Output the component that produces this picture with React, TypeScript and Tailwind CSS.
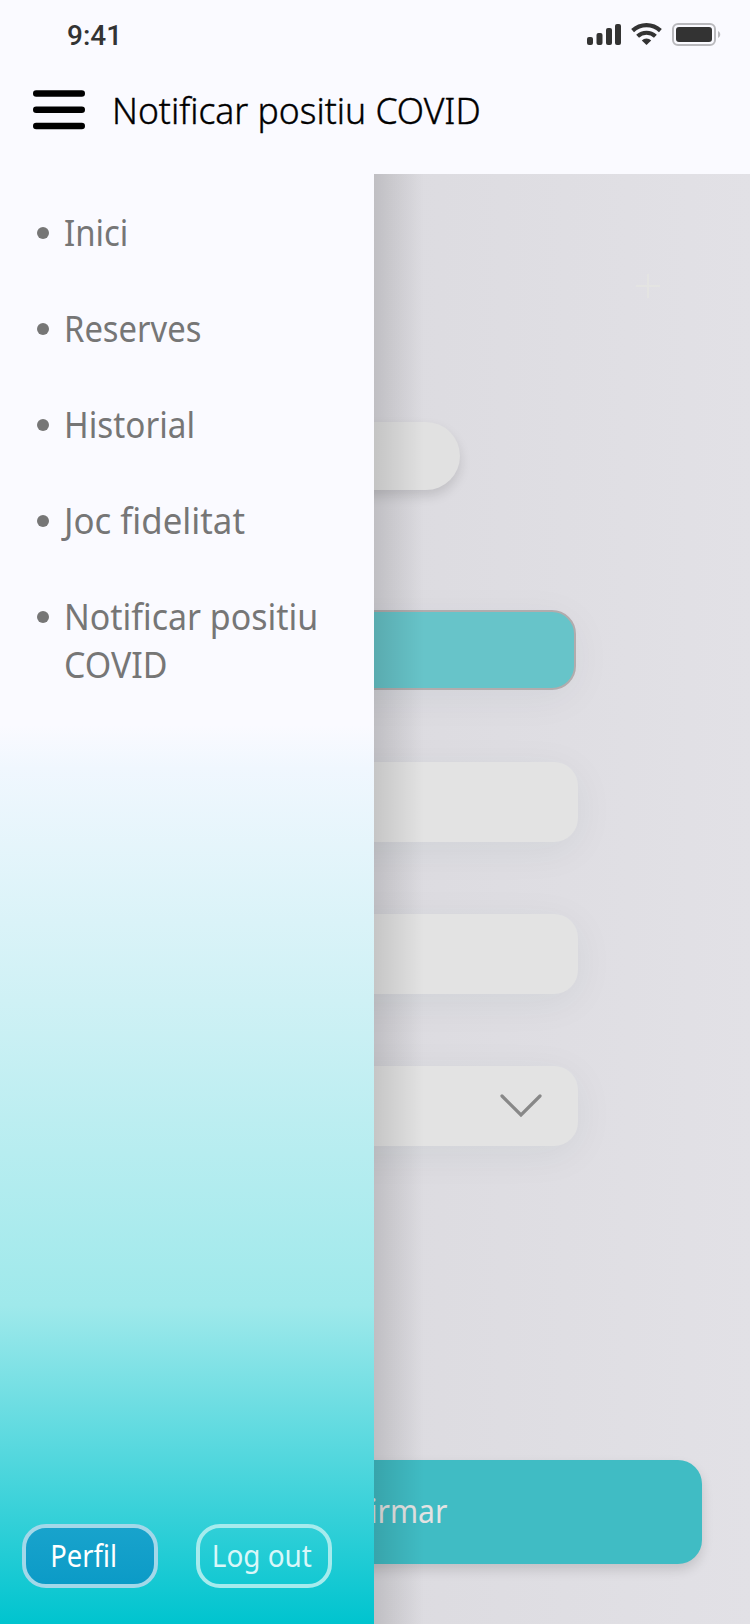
const items = [
  { label: "Inici", fit: "scale-x-[0.915]" },
  { label: "Reserves", fit: "scale-x-[0.91]" },
  { label: "Historial", fit: "scale-x-[0.925]" },
  { label: "Joc fidelitat", fit: "scale-x-[0.967]" },
  { label: "Notificar positiu COVID", fit: "scale-x-[0.942]" },
];

function StatusBar() {
  return (
    <div className="flex h-[70px] items-center justify-between pr-[27px] pl-[67px]">
      <span className="pt-px font-[Roboto] text-[28px] leading-none font-medium text-[#333]">9:41</span>
      <svg width="136" height="24" viewBox="0 0 136 24" fill="#333">
        <rect x="0" y="14" width="6" height="8" rx="2" />
        <rect x="9.5" y="10" width="6" height="12" rx="2" />
        <rect x="19" y="5" width="6" height="17" rx="2" />
        <rect x="28" y="1" width="6" height="21" rx="2" />
        <g fill="none" stroke="#333" strokeWidth="4.2">
          <path d="M45.6 7.6a20.4 20.4 0 0 1 27.8 0" />
          <path d="M50.6 13.2a13.2 13.2 0 0 1 17.8 0" />
        </g>
        <path d="M54.8 17.4a6.6 6.6 0 0 1 9.4 0L59.5 22z" />
        <rect x="86" y="1" width="42" height="21" rx="5" fill="none" stroke="#b9b9bd" strokeWidth="2" />
        <rect x="89" y="4" width="36" height="15" rx="3" />
        <path d="M131 8v7c3-1.500 3-5.500 0-7z" fill="#b9b9bd" />
      </svg>
    </div>
  );
}

function Field({ chevron = false }: { chevron?: boolean }) {
  return (
    <div className="flex h-20 w-[404px] items-center justify-end rounded-3xl bg-[#e3e3e3] pr-9 shadow-[0_8px_40px_rgba(0,60,70,0.06)]">
      {chevron && (
        <svg width="42" height="24" viewBox="0 0 42 24" fill="none" stroke="#888" strokeWidth="3.2" strokeLinecap="round">
          <path d="M2 2l19 19L40 2" />
        </svg>
      )}
    </div>
  );
}

export default function App() {
  return (
    <div className="flex h-[1624px] w-[750px] flex-col overflow-hidden bg-[#fafaff] font-['Noto_Sans',sans-serif]">
      <header className="h-[174px] shrink-0">
        <StatusBar />
        <div className="flex items-start pt-[17px] pl-[33px]">
          <svg className="mt-[2px]" width="52" height="44" viewBox="0 0 52 44" stroke="#000" strokeWidth="6.4" strokeLinecap="round">
            <path d="M3.200 4.500h45.600M3.200 20.700h45.600M3.200 37h45.600" />
          </svg>
          <h1 className="ml-[27px] origin-left scale-x-[0.986] text-[36px] leading-[48px] font-light text-black [-webkit-text-stroke:0.4px_black]">
            Notificar positiu COVID
          </h1>
        </div>
      </header>

      <main className="relative flex-1 bg-linear-to-r from-[#dcdbe0] from-50% to-[#e2e1e6]">
        <div className="flex h-full flex-col pl-[174px]">
          <div className="flex h-[248px] pt-[100px] pl-[462px]">
            <svg width="24" height="24" viewBox="0 0 24 24" stroke="#e4e4e2" strokeWidth="2">
              <path d="M12 0v24M0 12h24" />
            </svg>
          </div>
          <div className="h-[68px] w-[286px] rounded-full bg-[#e1e1e1] shadow-[0_6px_12px_rgba(0,0,0,0.13)]" />
          <div className="mt-[120px] mb-[72px] h-20 w-[402px] rounded-3xl border-2 border-[#b1acad] bg-[#67c4c9] shadow-[0_8px_40px_rgba(0,60,70,0.05)]" />
          <div className="flex flex-col gap-[72px]">
            <Field />
            <Field />
            <Field chevron />
          </div>
          <button className="mt-[314px] -ml-[126px] h-[104px] w-[654px] rounded-3xl bg-[#40bcc4] pb-[2px] text-[32px] text-[#e3e3e3] shadow-[0_6px_12px_rgba(0,0,0,0.13)]">
            <span className="inline-block scale-x-[0.94]">Confirmar</span>
          </button>
        </div>

        <div className="absolute inset-y-0 left-[374px] w-[50px] bg-linear-to-r from-black/13 to-transparent" />

        <aside className="absolute inset-y-0 left-0 flex w-[374px] flex-col justify-between bg-[linear-gradient(180deg,#fafaff_38%,#f0f7fe_41%,#cff1f5_57%,#9fe9eb_78%,#00c4cf_100%)] pt-[35px] pb-9">
          <ul className="flex flex-col gap-12 text-[36px] leading-[48px] text-[#767676]">
            {items.map(({ label, fit }) => (
              <li key={label} className="flex pl-[36.500px]">
                <span className="mt-[18px] mr-[15.500px] size-3 shrink-0 rounded-full bg-[#767676]" />
                <span className={`w-[290px] shrink-0 origin-left ${fit}`}>{label}</span>
              </li>
            ))}
          </ul>
          <div className="flex gap-[38px] pl-[22px]">
            <button className="h-16 w-[136px] rounded-3xl border-4 border-[#a3d8e9] bg-linear-to-b from-[#18a3cc] to-[#0b9bc7] pr-[13px] text-[30px] leading-none text-white">
              <span className="inline-block scale-x-[0.91]">Perfil</span>
            </button>
            <button className="h-16 w-[136px] rounded-3xl border-4 border-[#a6ebed] pr-[4px] text-[30px] leading-none whitespace-nowrap text-[#d9f7f9]">
              <span className="inline-block scale-x-[0.93]">Log out</span>
            </button>
          </div>
        </aside>
      </main>
    </div>
  );
}
